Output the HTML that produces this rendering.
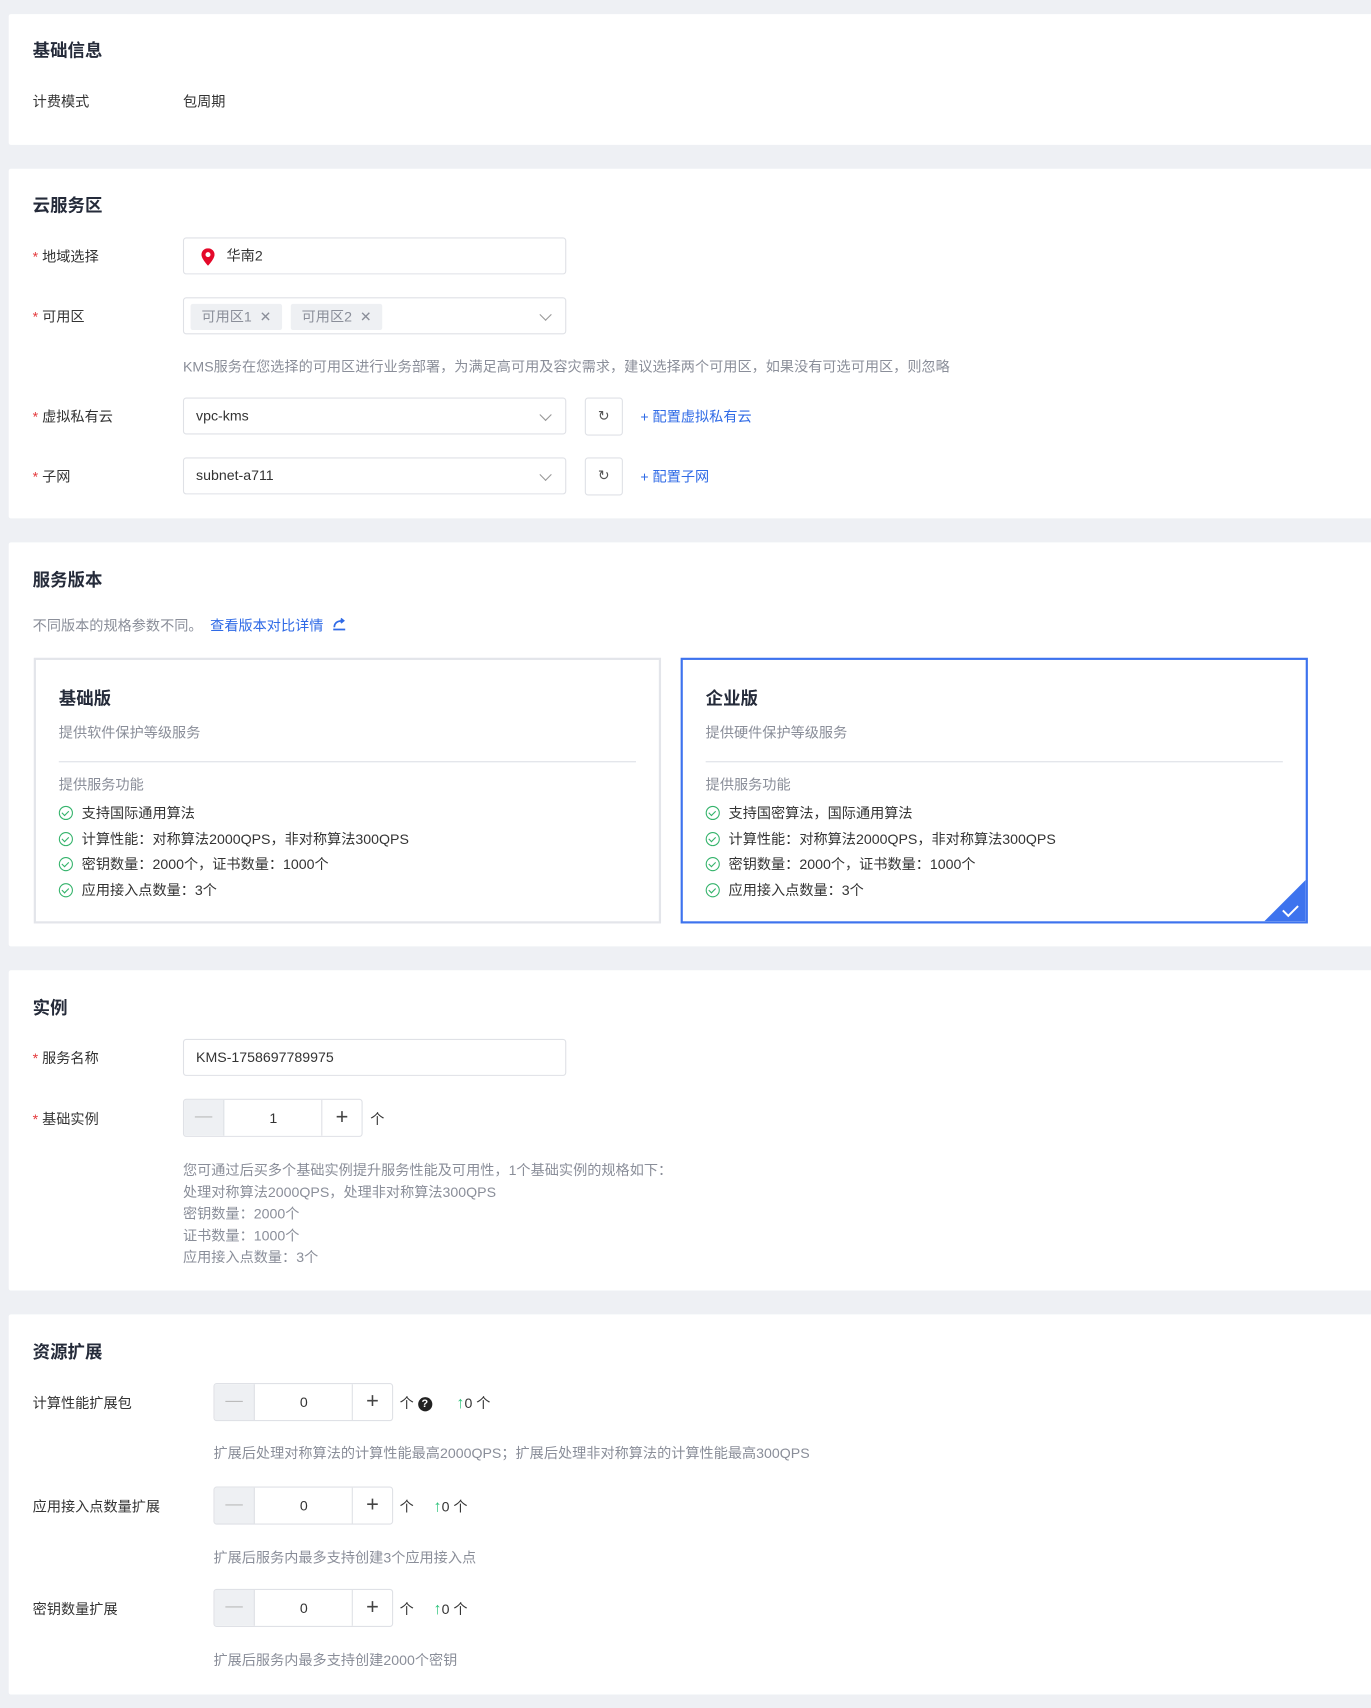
<!DOCTYPE html>
<html><head><meta charset="utf-8"><style>
html,body{margin:0;padding:0;width:1371px;height:1707px;overflow:hidden;background:#eef0f4}
#w{position:absolute;left:0;top:0;width:1259px;height:1568px;transform:scale(1.089);transform-origin:0 0;font-family:"Liberation Sans","Noto Sans CJK SC",sans-serif;font-size:13px;color:#333}
.a{position:absolute;white-space:nowrap}
.card{position:absolute;left:8px;width:1260px;background:#fff;border-radius:2px}
.t{position:absolute;font-size:16px;font-weight:bold;color:#252b3a;line-height:20px;margin-top:2px}
.l{position:absolute;line-height:16px;margin-top:1px}
.req:before{content:"* ";color:#e4393c}
.h{color:#8a8e99}
.in{position:absolute;height:32px;border:1px solid #dfe1e6;border-radius:3px;background:#fff;box-sizing:content-box}
.v{position:absolute;left:11px;top:8px;line-height:16px}
.dd{position:absolute;right:14px;top:11px;width:7px;height:7px;border-right:1px solid #999;border-bottom:1px solid #999;transform:rotate(45deg)}
.tag{position:absolute;top:5px;height:24px;background:#eef0f3;border-radius:2px;color:#8a8e99;line-height:24px;padding:0 10px}
.rb{position:absolute;width:33px;height:33px;border:1px solid #dfe1e6;border-radius:3px}
.blue{color:#2f6ae6}
.ver{position:absolute;top:604px;width:572px;height:240px;border:2px solid #e3e5ea;background:#fff}
.ver.s{border-color:#3d73ee}
.ck{display:inline-block;width:11px;height:11px;border:1px solid #34b36b;border-radius:50%;position:relative;vertical-align:-2px;margin-right:8px}
.ck:after{content:"";position:absolute;left:3px;top:2px;width:3px;height:5px;border-right:1px solid #34b36b;border-bottom:1px solid #34b36b;transform:rotate(45deg)}
.st{position:absolute;width:163px;height:33px;border:1px solid #dfe1e6;border-radius:3px;overflow:hidden}
.st .m{position:absolute;left:0;top:0;width:36px;height:33px;background:#eef0f3;border-right:1px solid #dfe1e6;color:#bbb;text-align:center;line-height:32px;font-size:16px}
.st .n{position:absolute;left:37px;width:90px;top:0;line-height:33px;text-align:center}
.st .p{position:absolute;right:0;top:0;width:36px;height:33px;border-left:1px solid #dfe1e6;text-align:center;line-height:32px;font-size:20px;font-weight:300;color:#444}
.g{color:#2bc37a;font-size:15px}
</style></head><body><div id="w">

<div class="card" style="top:13px;height:120px">
<div class="t" style="left:22px;top:23px">基础信息</div>
<div class="l" style="left:22px;top:72px">计费模式</div>
<div class="l" style="left:160px;top:72px">包周期</div>
</div>

<div class="card" style="top:155px;height:321px">
<div class="t" style="left:22px;top:23px">云服务区</div>
<div class="l req" style="left:22px;top:72px">地域选择</div>
<div class="in" style="left:160px;top:63px;width:350px"><svg style="position:absolute;left:16px;top:9px" width="12" height="16" viewBox="0 0 12 16"><path d="M6 0C2.7 0 0 2.6 0 5.8 0 9.8 6 16 6 16s6-6.2 6-10.2C12 2.6 9.3 0 6 0z" fill="#e4092a"/><circle cx="6" cy="5.8" r="2.3" fill="#fff"/></svg><div class="v" style="left:39px">华南2</div></div>
<div class="l req" style="left:22px;top:127px">可用区</div>
<div class="in" style="left:160px;top:118px;width:350px"><div class="tag" style="left:6px">可用区1 &nbsp;✕</div><div class="tag" style="left:98px">可用区2 &nbsp;✕</div><div class="dd"></div></div>
<div class="l h" style="left:160px;top:173px">KMS服务在您选择的可用区进行业务部署，为满足高可用及容灾需求，建议选择两个可用区，如果没有可选可用区，则忽略</div>
<div class="l req" style="left:22px;top:219px">虚拟私有云</div>
<div class="in" style="left:160px;top:210px;width:350px"><div class="v">vpc-kms</div><div class="dd"></div></div>
<div class="rb" style="left:529px;top:210px"><div class="a" style="left:11px;top:8px;font-size:13px;color:#555">↻</div></div>
<div class="l blue" style="left:580px;top:219px">+ 配置虚拟私有云</div>
<div class="l req" style="left:22px;top:274px">子网</div>
<div class="in" style="left:160px;top:265px;width:350px"><div class="v">subnet-a711</div><div class="dd"></div></div>
<div class="rb" style="left:529px;top:265px"><div class="a" style="left:11px;top:8px;font-size:13px;color:#555">↻</div></div>
<div class="l blue" style="left:580px;top:274px">+ 配置子网</div>
</div>

<div class="card" style="top:498px;height:371px">
<div class="t" style="left:22px;top:24px">服务版本</div>
<div class="l h" style="left:22px;top:68px">不同版本的规格参数不同。</div>
<div class="l blue" style="left:185px;top:68px">查看版本对比详情 <svg width="14" height="12" viewBox="0 0 14 12" style="margin-left:4px"><path d="M1 11h11M2 9c0-4 3-6 8-6M8 1l2.5 2L8 5" stroke="#2f6ae6" stroke-width="1.6" fill="none"/></svg></div>
</div>
<div class="ver" style="left:31px">
<div class="t" style="left:21px;top:25px">基础版</div>
<div class="l h" style="left:21px;top:58px">提供软件保护等级服务</div>
<div class="a" style="left:21px;top:93px;width:530px;border-top:1px solid #dcdfe6"></div>
<div class="l h" style="left:21px;top:106px">提供服务功能</div>
<div class="l" style="left:21px;top:132px"><span class="ck"></span>支持国际通用算法</div>
<div class="l" style="left:21px;top:156px"><span class="ck"></span>计算性能：对称算法2000QPS，非对称算法300QPS</div>
<div class="l" style="left:21px;top:179px"><span class="ck"></span>密钥数量：2000个，证书数量：1000个</div>
<div class="l" style="left:21px;top:203px"><span class="ck"></span>应用接入点数量：3个</div>
</div>
<div class="ver s" style="left:625px">
<div class="t" style="left:21px;top:25px">企业版</div>
<div class="l h" style="left:21px;top:58px">提供硬件保护等级服务</div>
<div class="a" style="left:21px;top:93px;width:530px;border-top:1px solid #dcdfe6"></div>
<div class="l h" style="left:21px;top:106px">提供服务功能</div>
<div class="l" style="left:21px;top:132px"><span class="ck"></span>支持国密算法，国际通用算法</div>
<div class="l" style="left:21px;top:156px"><span class="ck"></span>计算性能：对称算法2000QPS，非对称算法300QPS</div>
<div class="l" style="left:21px;top:179px"><span class="ck"></span>密钥数量：2000个，证书数量：1000个</div>
<div class="l" style="left:21px;top:203px"><span class="ck"></span>应用接入点数量：3个</div>
<svg style="position:absolute;right:0;bottom:0" width="38" height="38" viewBox="0 0 38 38"><path d="M38 0V38H0z" fill="#3d73ee"/><path d="M17 28l5 5 9-9" stroke="#fff" stroke-width="1.8" fill="none"/></svg>
</div>

<div class="card" style="top:891px;height:294px">
<div class="t" style="left:22px;top:24px">实例</div>
<div class="l req" style="left:22px;top:72px">服务名称</div>
<div class="in" style="left:160px;top:63px;width:350px"><div class="v">KMS-1758697789975</div></div>
<div class="l req" style="left:22px;top:128px">基础实例</div>
<div class="st" style="left:160px;top:118px"><div class="m">—</div><div class="n">1</div><div class="p">+</div></div>
<div class="l" style="left:332px;top:128px">个</div>
<div class="l h" style="left:160px;top:173px;line-height:20px;white-space:normal;width:600px">您可通过后买多个基础实例提升服务性能及可用性，1个基础实例的规格如下：<br>处理对称算法2000QPS，处理非对称算法300QPS<br>密钥数量：2000个<br>证书数量：1000个<br>应用接入点数量：3个</div>
</div>

<div class="card" style="top:1207px;height:349px">
<div class="t" style="left:22px;top:24px">资源扩展</div>
<div class="l" style="left:22px;top:73px">计算性能扩展包</div>
<div class="st" style="left:188px;top:63px"><div class="m">—</div><div class="n">0</div><div class="p">+</div></div>
<div class="l" style="left:359px;top:73px">个 <span style="display:inline-block;width:13px;height:13px;border-radius:50%;background:#222;color:#fff;font-size:10px;font-weight:bold;text-align:center;line-height:13px;vertical-align:1px">?</span></div>
<div class="l" style="left:411px;top:73px"><span class="g">↑</span>0 个</div>
<div class="l h" style="left:188px;top:119px">扩展后处理对称算法的计算性能最高2000QPS；扩展后处理非对称算法的计算性能最高300QPS</div>
<div class="l" style="left:22px;top:168px">应用接入点数量扩展</div>
<div class="st" style="left:188px;top:158px"><div class="m">—</div><div class="n">0</div><div class="p">+</div></div>
<div class="l" style="left:359px;top:168px">个</div>
<div class="l" style="left:390px;top:168px"><span class="g">↑</span>0 个</div>
<div class="l h" style="left:188px;top:215px">扩展后服务内最多支持创建3个应用接入点</div>
<div class="l" style="left:22px;top:262px">密钥数量扩展</div>
<div class="st" style="left:188px;top:252px"><div class="m">—</div><div class="n">0</div><div class="p">+</div></div>
<div class="l" style="left:359px;top:262px">个</div>
<div class="l" style="left:390px;top:262px"><span class="g">↑</span>0 个</div>
<div class="l h" style="left:188px;top:309px">扩展后服务内最多支持创建2000个密钥</div>
</div>

</div></body></html>
